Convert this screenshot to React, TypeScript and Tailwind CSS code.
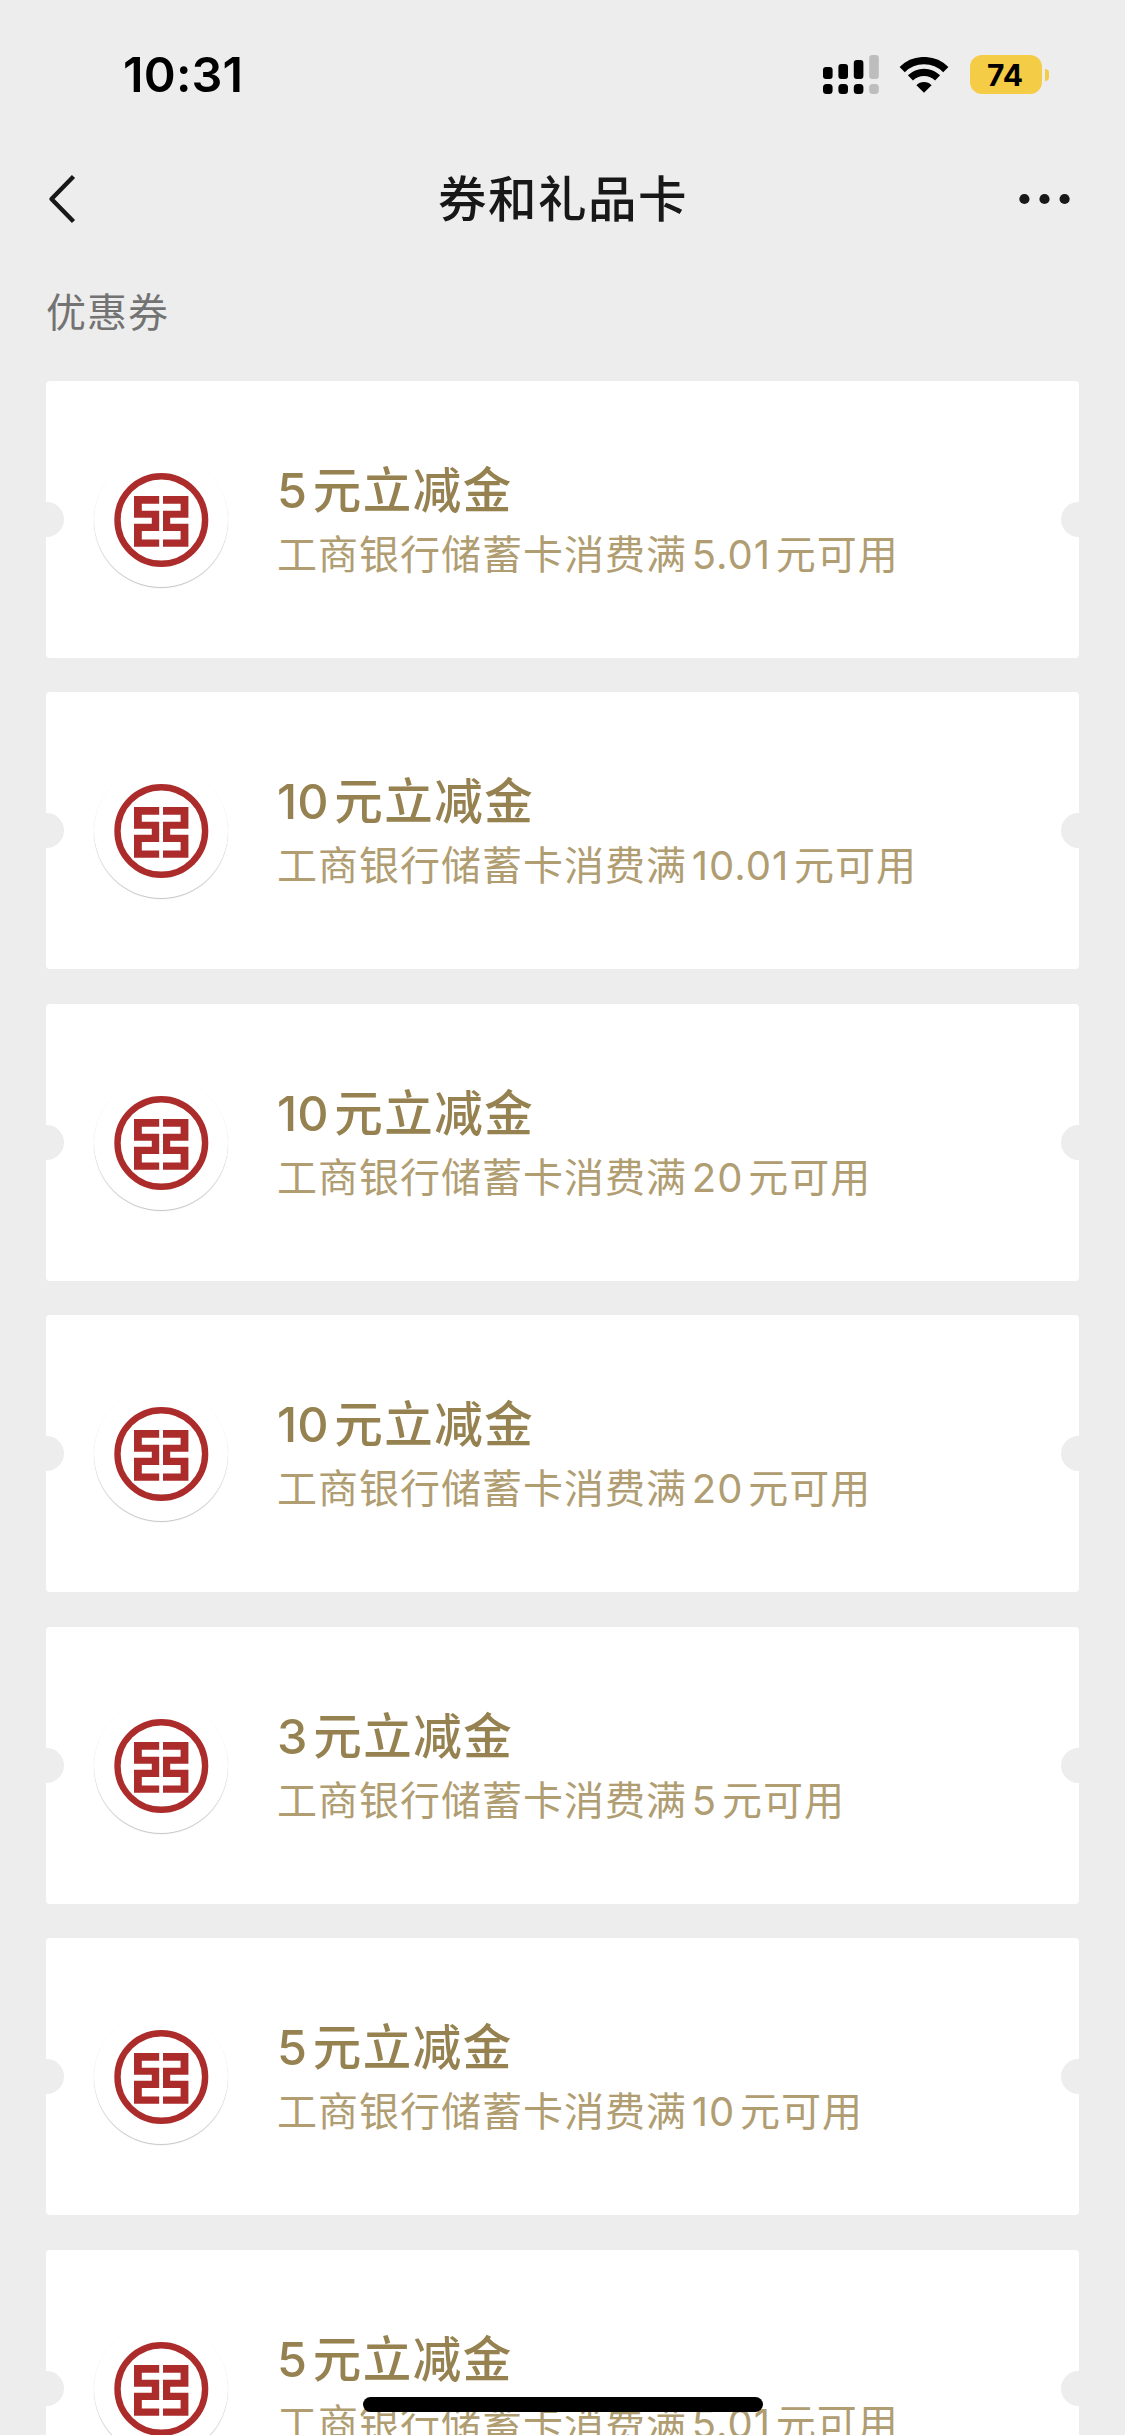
import { clsx } from 'clsx';

interface Coupon {
  id: number;
  title: string;
  description: string;
}

const COUPONS: Coupon[] = [
  { id: 1, title: '5元立减金', description: '工商银行储蓄卡消费满5.01元可用' },
  { id: 2, title: '10元立减金', description: '工商银行储蓄卡消费满10.01元可用' },
  { id: 3, title: '10元立减金', description: '工商银行储蓄卡消费满20元可用' },
  { id: 4, title: '10元立减金', description: '工商银行储蓄卡消费满20元可用' },
  { id: 5, title: '3元立减金', description: '工商银行储蓄卡消费满5元可用' },
  { id: 6, title: '5元立减金', description: '工商银行储蓄卡消费满10元可用' },
  { id: 7, title: '5元立减金', description: '工商银行储蓄卡消费满5.01元可用' },
];

// Chinese text with the numbers set in the latin face and a little air around them
function MixedText({ text }: { text: string }) {
  const parts = text.split(/([\d.]+)/).filter(Boolean);
  return (
    <>
      {parts.map((part, i) =>
        /\d/.test(part) ? (
          <span
            key={i}
            className={clsx(
              'mr-[0.12em] font-[Inter,sans-serif]',
              i > 0 ? 'ml-[0.12em] tracking-[0.025em]' : 'tracking-normal',
            )}
          >
            {part}
          </span>
        ) : (
          <span key={i}>{part}</span>
        ),
      )}
    </>
  );
}

function SignalIcon() {
  return (
    <svg width="56" height="39" viewBox="0 0 56 39">
      <rect x="0" y="12" width="9.6" height="12" rx="3" />
      <rect x="15.4" y="9" width="9.6" height="15" rx="3" />
      <rect x="30.8" y="5" width="9.6" height="19" rx="3" />
      <rect x="46.2" y="0" width="9.6" height="24" rx="3" fill="#bdbdbd" />
      <rect x="0" y="29" width="9.6" height="10" rx="3.5" />
      <rect x="15.4" y="29" width="9.6" height="10" rx="3.5" />
      <rect x="30.8" y="29" width="9.6" height="10" rx="3.5" />
      <rect x="46.2" y="29" width="9.6" height="10" rx="3.5" fill="#bdbdbd" />
    </svg>
  );
}

function WifiIcon() {
  return (
    <svg width="50" height="36" viewBox="0 0 50 36" fill="none" stroke="#000">
      <path d="M3.2 12.6A31 31 0 0 1 46.8 12.6" strokeWidth="7.4" />
      <path d="M11.4 20.9A19.3 19.3 0 0 1 38.6 20.9" strokeWidth="7.2" />
      <path d="M17.4 28.2A10.8 10.8 0 0 1 32.6 28.2L25 35.8Z" fill="#000" stroke="none" />
    </svg>
  );
}

function StatusBar() {
  return (
    <div className="flex h-[150px] items-start justify-between pl-[123px] pr-[76px]">
      <span className="mt-[45px] font-[Inter,sans-serif] text-[48.5px] font-semibold leading-[60px] tracking-[0.2px] text-black">
        10:31
      </span>
      <div className="mt-[55px] flex items-start">
        <SignalIcon />
        <div className="ml-[20px] mt-[2px]">
          <WifiIcon />
        </div>
        <div className="ml-[21px] flex items-center gap-[3px]">
          <div className="flex h-[39px] w-[72px] items-center justify-center rounded-[12px] bg-[#f5cc45] pr-[2px] font-[Inter,sans-serif] text-[30px] font-bold leading-none text-black">
            74
          </div>
          <div className="h-[12px] w-[4px] rounded-r-[4px] bg-[#f5cc45]" />
        </div>
      </div>
    </div>
  );
}

function NavBar() {
  return (
    <header className="grid h-[98px] grid-cols-[1fr_auto_1fr] items-center pl-[47px] pr-[55px]">
      <svg width="30" height="50" viewBox="0 0 30 50" fill="none" stroke="#181818" strokeWidth="4.4">
        <path d="M26.5 2.5L4.5 25L26.5 47.5" strokeLinejoin="round" />
      </svg>
      <h1 className="ml-[9px] pb-[5px] text-[48.5px] font-medium leading-none tracking-[1.5px] text-[#181818]">
        券和礼品卡
      </h1>
      <svg className="justify-self-end" width="51" height="12" viewBox="0 0 51 12" fill="#181818">
        <circle cx="5.4" cy="6" r="5.1" />
        <circle cx="25.5" cy="6" r="5.1" />
        <circle cx="45.6" cy="6" r="5.1" />
      </svg>
    </header>
  );
}

function BankLogo() {
  return (
    <div className="mt-[1px] flex size-[134px] items-center justify-center rounded-full bg-white shadow-[0_1px_1px_rgba(0,0,0,0.24)]">
      <svg width="96" height="96" viewBox="0 0 96 96" fill="#ac2c2b">
        <circle cx="48.3" cy="48" r="43.8" fill="none" stroke="#ac2c2b" strokeWidth="6.4" />
        <path d="M21 24H46.2V31.7H28.8V38.8H46.2V59H28.8V67.5H46.2V74.7H21V51.7H38.8V45.7H21Z" />
        <path d="M75.4 24H50V31.7H67.6V38.8H50V59H67.6V67.5H50V74.7H75.4V51.7H57.2V45.7H75.4Z" />
      </svg>
    </div>
  );
}

function CouponCard({ coupon }: { coupon: Coupon }) {
  return (
    <li className="relative flex h-[277px] shrink-0 items-center overflow-hidden rounded-[4px] bg-white pl-[48px]">
      {/* ticket notches */}
      <span className="absolute -left-[17px] top-[121px] size-[35px] rounded-full bg-[#ededed]" />
      <span className="absolute -right-[17px] top-[121px] size-[35px] rounded-full bg-[#ededed]" />
      <BankLogo />
      <div className="ml-[49px] mt-[3px] whitespace-nowrap">
        <p className="text-[48.5px] font-medium leading-[66px] tracking-[1.5px] text-[#968250]">
          <MixedText text={coupon.title} />
        </p>
        <p className="-mt-[5px] text-[40px] leading-[66px] tracking-[1px] text-[#b09d72]">
          <MixedText text={coupon.description} />
        </p>
      </div>
    </li>
  );
}

export default function App() {
  return (
    <div className="relative h-[2435px] w-[1125px] overflow-hidden bg-[#ededed] font-[Noto_Sans_CJK_SC,sans-serif]">
      <StatusBar />
      <NavBar />
      <main className="px-[46px]">
        <h2 className="pt-[32px] text-[40px] leading-[60px] tracking-[1px] text-[#737373]">优惠券</h2>
        <ul className="mt-[40.7px] flex flex-col gap-[34.5px]">
          {COUPONS.map((coupon) => (
            <CouponCard key={coupon.id} coupon={coupon} />
          ))}
        </ul>
      </main>
      {/* home indicator */}
      <div className="absolute bottom-[23px] left-[363px] h-[15px] w-[400px] rounded-full bg-black" />
    </div>
  );
}
